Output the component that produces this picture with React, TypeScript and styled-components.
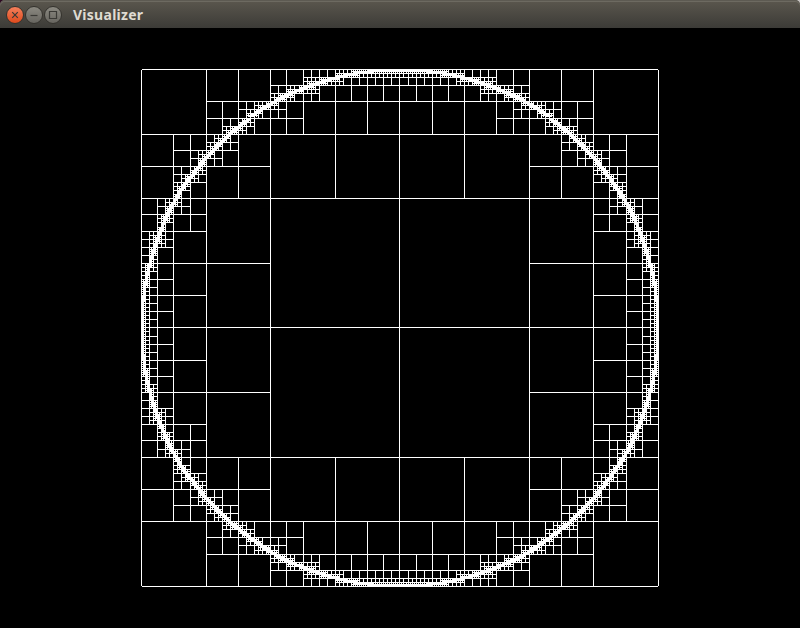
import React from "react";
import styled, { createGlobalStyle } from "styled-components";

const GlobalStyle = createGlobalStyle`
  html, body { margin: 0; padding: 0; background: #000; overflow: hidden; }
`;

const SIZE = 516.8;
const X0 = 141.55;
const Y0 = 41.55;
const MAX_DEPTH = 9;
const CX = X0 + SIZE / 2;
const CY = Y0 + SIZE / 2;
const OUTER = SIZE / 2;
const INNER = OUTER - 0.5;

/* True when the thin ring between INNER and OUTER passes through the square cell. */
function crosses(x: number, y: number, s: number): boolean {
  const nx = Math.max(x - CX, 0, CX - x - s);
  const ny = Math.max(y - CY, 0, CY - y - s);
  const fx = Math.max(Math.abs(x - CX), Math.abs(x + s - CX));
  const fy = Math.max(Math.abs(y - CY), Math.abs(y + s - CY));
  return Math.hypot(nx, ny) <= OUTER && Math.hypot(fx, fy) >= INNER;
}

/* Collects the dividing lines of every subdivided cell, all wound clockwise. */
function subdivide(x: number, y: number, s: number, depth: number, out: string[]) {
  if (depth >= MAX_DEPTH || !crosses(x, y, s)) return;
  const h = s / 2;
  const l = Math.floor(x);
  const t = Math.floor(y);
  const r = Math.floor(x + s);
  const b = Math.floor(y + s);
  const mx = Math.floor(x + h);
  const my = Math.floor(y + h);
  out.push(`M${l} ${my}H${r}V${my + 1}H${l}Z`, `M${mx} ${t}H${mx + 1}V${b}H${mx}Z`);
  subdivide(x, y, h, depth + 1, out);
  subdivide(x + h, y, h, depth + 1, out);
  subdivide(x, y + h, h, depth + 1, out);
  subdivide(x + h, y + h, h, depth + 1, out);
}

const lines: string[] = [
  "M142 41H658V42H142Z",
  "M142 558H658V559H142Z",
  "M141 42H142V558H141Z",
  "M658 42H659V558H658Z",
];
subdivide(X0, Y0, SIZE, 0, lines);
const treePath = lines.join("");

const Window = styled.div`
  width: 800px;
  height: 628px;
  display: flex;
  flex-direction: column;
  background: #000;
`;

const Frame = styled.div`
  flex: none;
  background: linear-gradient(90deg, #2d0a22 50%, #c9c5c3 50%);
`;

const TitleBar = styled.header`
  box-sizing: border-box;
  height: 28px;
  display: flex;
  align-items: center;
  padding: 0 0 0 6.4px;
  border-radius: 5px 5px 0 0;
  background: linear-gradient(#5b574e, #3c3b37);
  box-shadow: inset 0 1px #5d5a52, inset 0 2px #6d6a61;
`;

const Buttons = styled.div`
  display: flex;
  gap: 1px;
  padding-top: 1px;
`;

const WindowButton = styled.button<{ $close?: boolean }>`
  width: 18px;
  height: 18px;
  padding: 0;
  border: 1px solid #35332e;
  border-radius: 50%;
  display: grid;
  place-items: center;
  color: #3a3935;
  background: ${(p) => (p.$close ? "linear-gradient(#f4805c, #df4a1c)" : "linear-gradient(#8b8981, #67655f)")};
`;

const Title = styled.h1`
  margin: 0 0 0 10.6px;
  font: 700 14px/20px "Noto Sans", sans-serif;
  letter-spacing: 0.27px;
  color: #dfdbd2;
  padding-top: 1px;
`;

const Canvas = styled.main`
  flex: 1;
  display: flex;
  background: #000;
`;

function Glyph({ d }: { d: string }) {
  return (
    <svg width="16" height="16" viewBox="0 0 16 16" fill="none" stroke="currentColor" strokeWidth="1.2">
      <path d={d} />
    </svg>
  );
}

export default function App() {
  return (
    <Window>
      <GlobalStyle />
      <Frame>
        <TitleBar>
          <Buttons>
            <WindowButton $close aria-label="Close">
              <Glyph d="M5.2 5.2L10.8 10.8M10.8 5.2L5.2 10.8" />
            </WindowButton>
            <WindowButton aria-label="Minimize">
              <Glyph d="M4.5 8.5H11.5" />
            </WindowButton>
            <WindowButton aria-label="Maximize">
              <Glyph d="M4.5 4.5H11.5V11.5H4.5Z" />
            </WindowButton>
          </Buttons>
          <Title>Visualizer</Title>
        </TitleBar>
      </Frame>
      <Canvas>
        <svg width="800" height="600" viewBox="0 0 800 600" shapeRendering="crispEdges">
          <path d={treePath} fill="#fff" />
        </svg>
      </Canvas>
    </Window>
  );
}
